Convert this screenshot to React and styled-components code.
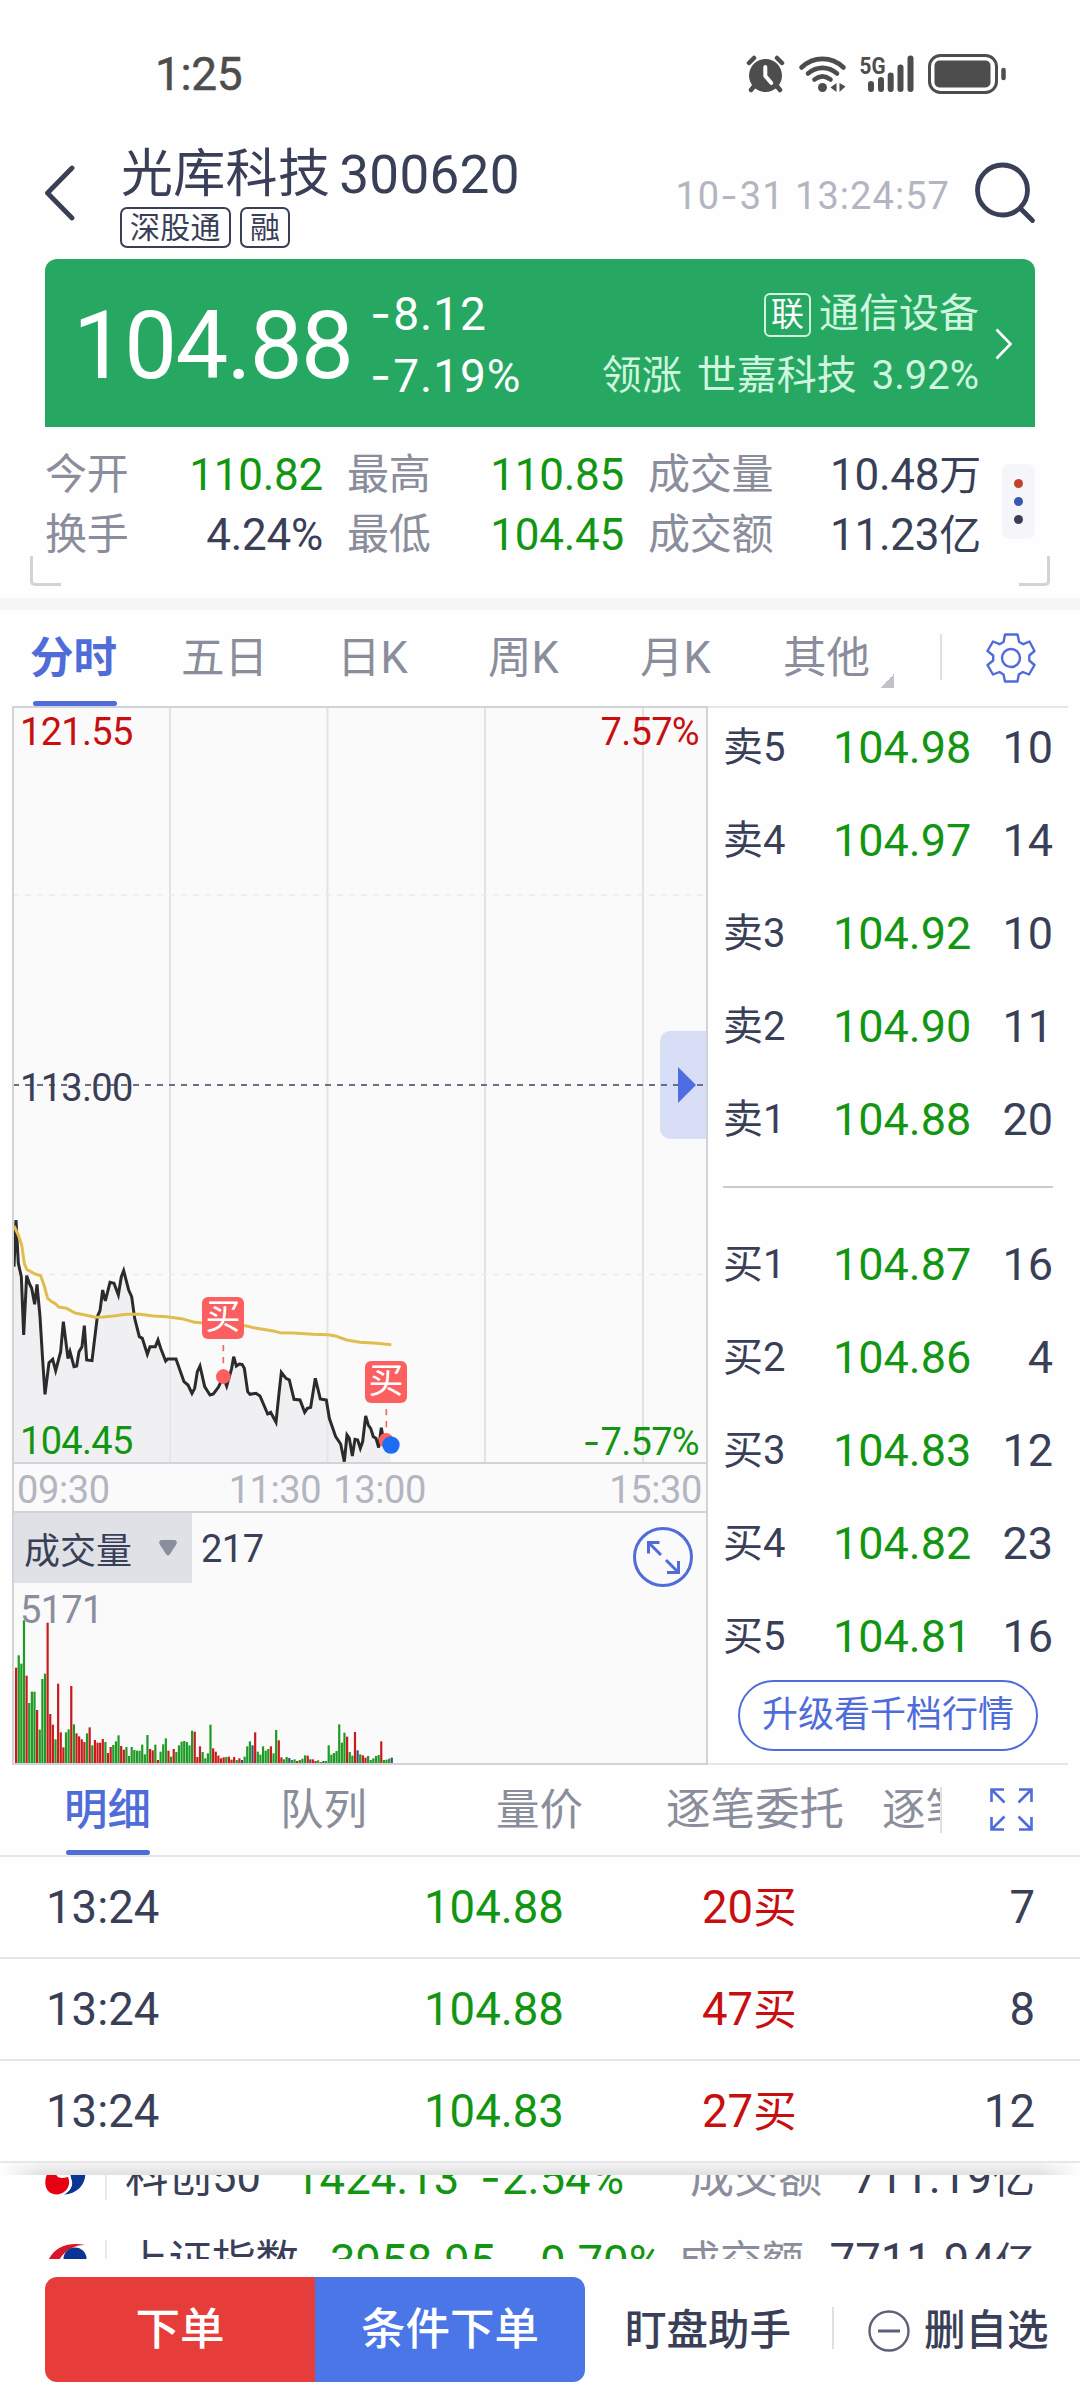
import React from 'react'
import styled, { createGlobalStyle } from 'styled-components'

const ink = '#3a3f58'
const muted = '#8a8d9b'
const faint = '#b3b5c1'
const blue = '#4f6cd9'
const green = '#129612'
const red = '#c80f0f'
const line = '#e7e7e9'
const frame = '#d2d3d9'

const GlobalStyle = createGlobalStyle`
* {
  box-sizing: border-box;
}
body {
  margin: 0;
  background: #fefefe;
  font-family: Roboto, "Noto Sans CJK SC", sans-serif;
  color: ${ink};
}
svg {
  display: block;
  flex: none;
}
`

const Page = styled.div`
width: 1080px;
height: 2400px;
overflow: hidden;
display: flex;
flex-direction: column;
background: #fefefe;
white-space: nowrap;
`

const Dash = styled.span`
font-family: Inter, sans-serif;
margin-right: 1px;
`

/* ---------- status bar ---------- */

const StatusBar = styled.div`
height: 110px;
padding: 37px 73px 0 155px;
display: flex;
align-items: center;
justify-content: space-between;
flex: none;
`
const Clock = styled.div`
font-size: 46px;
line-height: 50px;
color: #4d4d4d;
letter-spacing: -0.4px;
-webkit-text-stroke: 0.5px #4d4d4d;
`

/* ---------- header ---------- */

const Header = styled.header`
height: 149px;
display: flex;
flex: none;
padding: 0 44px;
`
const Back = styled.div`
width: 77px;
padding-top: 55px;
`
const Names = styled.div`
padding-top: 35px;
flex: 1;
`
const Title = styled.h1`
margin: 0;
font-size: 53px;
font-weight: 400;
line-height: 60px;
letter-spacing: 0.3px;
display: flex;
gap: 9px;
`
const Name = styled.span`
font-size: 52px;
`
const Tags = styled.div`
margin: 2px 0 0 -1px;
display: flex;
gap: 9px;
`
const Tag = styled.span`
border: 2px solid ${ink};
border-radius: 7px;
height: 41px;
line-height: 38px;
padding: 0 8px;
font-size: 30px;
letter-spacing: 0.3px;
`
const Stamp = styled.div`
font-size: 38px;
line-height: 44px;
padding-top: 63px;
color: ${faint};
letter-spacing: 1.05px;
margin-right: 25px;
`
const Search = styled.div`
padding-top: 52px;
`

/* ---------- quote card ---------- */

const Card = styled.section`
width: 990px;
height: 168px;
margin-left: 45px;
flex: none;
border-radius: 12px 12px 0 0;
background: #27a862;
color: #fff;
display: flex;
padding: 24px 22px 22px 28px;
`
const Last = styled.div`
font-size: 94px;
line-height: 126px;
letter-spacing: -1.6px;
width: 297px;
`
const Change = styled.div`
font-size: 46px;
line-height: 61px;
letter-spacing: 1px;
flex: 1;
`
const Sector = styled.div`
font-size: 40px;
line-height: 62px;
color: #cff7df;
text-align: right;
word-spacing: 5px;
`
const SectorTag = styled.span`
display: inline-block;
height: 44px;
line-height: 40px;
width: 47px;
text-align: center;
font-size: 33px;
border: 2px solid #cff7df;
border-radius: 6px;
color: #fff;
margin-right: 8px;
vertical-align: 1px;
`
const Arrow = styled.div`
padding: 45px 0 0 16px;
`

/* ---------- stats ---------- */

const Stats = styled.section`
height: 171px;
flex: none;
position: relative;
display: flex;
padding: 18px 44px 0 45px;

&::before, &::after {
  content: "";
  position: absolute;
  top: 129px;
  width: 28px;
  height: 27px;
  border-bottom: 3px solid ${frame};
}
&::before {
  left: 30px;
  border-left: 3px solid ${frame};
  border-bottom-left-radius: 5px;
}
&::after {
  right: 30px;
  border-right: 3px solid ${frame};
  border-bottom-right-radius: 5px;
}
`
const StatGrid = styled.div`
display: grid;
grid-template-columns: 278px 277px 333px;
grid-auto-rows: 60px;
column-gap: 24px;
width: 937px;
`
const Stat = styled.div`
display: flex;
justify-content: space-between;
line-height: 60px;
font-size: 44px;
letter-spacing: -0.25px;
color: ${props => props.color || ink};
`
const StatLabel = styled.span`
font-size: ${props => props.size || 42}px;
color: ${muted};
`
const Unit = styled.span`
font-size: ${props => props.size || 42}px;
`
const More = styled.div`
width: 33px;
height: 75px;
margin: 19px 0 0 20px;
border-radius: 8px;
background: #f5f6f9;
display: flex;
flex-direction: column;
align-items: center;
justify-content: center;
gap: 9px;
`
const Dot = styled.i`
width: 9px;
height: 9px;
border-radius: 50%;
background: ${props => props.color};
`
const Band = styled.div`
height: 12px;
flex: none;
background: #f6f6f9;
`

/* ---------- period tabs ---------- */

const Tabs = styled.nav`
height: 96px;
flex: none;
display: flex;
padding-left: 30px;
`
const Tab = styled.div`
width: ${props => props.w}px;
font-size: 43.5px;
line-height: 97px;
color: ${props => (props.$active ? blue : muted)};
font-weight: ${props => (props.$active ? 700 : 400)};
`
const Mark = styled.div`
width: 84px;
height: 5px;
margin: ${props => props.$top}px 0 0 ${props => props.$left || 1}px;
border-radius: 3px;
background: ${blue};
`
const Caret = styled.div`
margin: 64px 46px 0 0;
width: 14px;
height: 14px;
background: linear-gradient(135deg, transparent 50%, #c2c3c8 50%);
`
const Rule = styled.div`
width: 2px;
height: ${props => props.h || 46}px;
margin-top: ${props => props.$top}px;
background: #e0e0e3;
`
const Gear = styled.div`
margin: 23px 0 0 44px;
`

/* ---------- chart ---------- */

const Main = styled.main`
display: flex;
height: 1059px;
flex: none;
padding: 0 12px;
`
const Charts = styled.div`
width: 696px;
display: flex;
flex-direction: column;
`
const Pane = styled.div`
position: relative;
height: ${props => props.h}px;
background: #fafafa;
border: 2px solid ${frame};
overflow: hidden;
`
const Plot = styled.svg`
position: absolute;
left: -2px;
top: -2px;
`
/* value labels drawn over the plot, on its left or right edge */
const PaneText = styled.span`
position: absolute;
${props => (props.$right ? 'right: 7px;' : 'left: 6px;')}
top: ${props => props.y}px;
font-size: 38px;
line-height: 40px;
letter-spacing: -0.7px;
color: ${props => props.color};
`
const Axis = styled.div`
height: 47px;
background: #fafafa;
border: solid ${frame};
border-width: 0 2px;
display: flex;
padding: 0 4px 0 3px;
font-size: 38px;
line-height: 53px;
letter-spacing: -0.4px;
color: ${faint};

span:nth-child(2) {
  margin-left: 119px;
}
span:nth-child(3) {
  margin: 0 auto 0 12px;
}
`
const Drawer = styled.div`
position: absolute;
right: -2px;
top: 323px;
width: 48px;
height: 108px;
border-radius: 10px 0 0 10px;
background: rgba(79, 108, 230, 0.2);

&::after {
  content: "";
  position: absolute;
  left: 18px;
  top: 36px;
  border: solid transparent;
  border-width: 18px 0 18px 18px;
  border-left-color: #4f6ce0;
}
`
const Buy = styled.span`
position: absolute;
left: ${props => props.x}px;
top: ${props => props.y}px;
width: 42px;
height: 42px;
border-radius: 6px;
background: #fb5f60;
color: #fff;
font-size: 35px;
line-height: 42px;
text-align: center;
`
const VolumeHead = styled.div`
display: flex;
align-items: center;
font-size: 38px;
height: 72px;
gap: 9px;
letter-spacing: -0.5px;
`
const Picker = styled.div`
display: flex;
align-items: center;
justify-content: space-between;
width: 178px;
height: 70px;
margin-bottom: 2px;
padding: 0 14px 0 10px;
font-size: 36px;
letter-spacing: 0;
background: #e0e1e6;
`
const Enlarge = styled.div`
position: absolute;
left: 619px;
top: 14px;
`

/* ---------- order book ---------- */

const Book = styled.div`
width: 360px;
border-top: 2px solid ${line};
border-bottom: 2px solid ${line};
padding: 0 15px;
`
const Levels = styled.div`
margin-top: ${props => props.$top}px;
`
const Level = styled.div`
display: flex;
height: 93px;
line-height: 93px;
font-size: 45px;
`
const Side = styled.span`
width: 110px;
font-size: 40px;
`
const Price = styled.span`
flex: 1;
color: ${green};
`
const Split = styled.div`
height: 2px;
margin-top: 20px;
background: #c9cacf;
`
const Upgrade = styled.div`
width: 300px;
height: 71px;
margin: -3px 0 0 15px;
border: 2px solid ${blue};
border-radius: 36px;
color: ${blue};
text-align: center;
font-size: 36px;
line-height: 67px;
`

/* ---------- trade list ---------- */

const TradeTabs = styled.nav`
height: 92px;
flex: none;
display: flex;
padding-left: 64px;
border-bottom: 2px solid ${line};
`
const TabWindow = styled.div`
width: 876px;
height: 90px;
overflow: hidden;
display: flex;
`
const TradeTab = styled(Tab)`
line-height: 91px;
font-size: ${props => props.size || 43.5}px;
flex: none;
font-weight: ${props => (props.$active ? 500 : 400)};
`
const Expand = styled.div`
margin: 23px 0 0 48px;
`
const Trade = styled.div`
height: 102px;
flex: none;
display: grid;
grid-template-columns: 378px 278px 1fr auto;
padding: 0 45px 0 46px;
line-height: 102px;
font-size: 45.5px;
border-bottom: 2px solid ${line};
`
const Tint = styled.span`
color: ${props => props.color};
`

/* ---------- index ticker ---------- */

const Shade = styled.div`
height: 12px;
flex: none;
background: linear-gradient(#f4f4f4, #e0e0e1);
-webkit-mask-image: linear-gradient(90deg, transparent, #000 40px, #000 1040px, transparent);
mask-image: linear-gradient(90deg, transparent, #000 40px, #000 1040px, transparent);
`
const Ticker = styled.div`
height: 84px;
flex: none;
overflow: hidden;
`
const Index = styled.div`
height: 83px;
margin-top: ${props => props.$top || 0}px;
padding: 0 45px;
display: grid;
grid-template-columns: ${props => props.cols};
align-items: center;
font-size: 45.5px;
line-height: 83px;

& > :last-child {
  justify-self: end;
}
`
const IndexName = styled.span`
font-size: 43.5px;
border-left: 2px solid #e8e8ea;
line-height: 44px;
padding-left: 18px;
`

/* ---------- action bar ---------- */

const Actions = styled.footer`
height: 141px;
flex: none;
display: flex;
padding: 18px 0 0 45px;
line-height: 107px;
font-size: 41.5px;
font-weight: 500;
`
const Order = styled.div`
width: 270px;
height: 105px;
text-align: center;
font-size: 44.5px;
color: #fff;
background: ${props => props.color};
border-radius: ${props => (props.$left ? '12px 0 0 12px' : '0 12px 12px 0')};
`
const Helper = styled.span`
margin: 0 41px 0 40px;
`
const Remove = styled.span`
height: 107px;
display: flex;
align-items: center;
gap: 14px;
margin-left: 34px;
`

const pricePoints = '42,320 48,180 55,310 64,350 71,525 80,347 88,370 95,385 104,433 111,373 120,470 128,600 135,703 147,608 158,598 167,632 182,575 190,485 204,596 210,575 222,620 230,618 237,575 246,560 253,497 260,600 276,602 292,470 300,452 308,390 316,423 330,367 342,370 355,405 364,350 371,332 386,390 395,410 404,475 418,530 427,535 442,583 450,560 466,560 474,540 482,565 497,603 503,597 528,597 552,665 564,675 576,700 584,685 592,635 600,618 614,680 630,705 640,702 655,682 670,650 680,678 695,625 701,590 709,618 718,612 726,613 733,625 743,695 750,703 768,700 780,708 803,762 812,757 828,787 836,710 844,637 858,655 868,660 882,718 900,720 914,757 922,745 932,742 946,655 961,717 979,720 988,775 1007,830 1022,852 1033,905 1041,825 1048,835 1057,888 1065,838 1073,840 1081,865 1088,845 1097,768 1105,795 1112,805 1120,830 1128,835 1136,863 1144,803 1152,850 1172,855'
const averagePoints = '42,198 55,225 65,255 73,310 80,328 105,342 122,347 132,375 143,415 155,425 165,430 176,441 200,445 225,459 260,466 285,472 310,471 340,468 380,463 420,463 460,468 500,470 545,476 585,487 610,489 670,492 740,498 770,505 820,513 840,518 880,519 940,523 985,524 1010,529 1040,540 1080,547 1130,550 1174,554'

// one bar a minute: direction (r up, g down, k flat) and height in thirds of a pixel
const volume = 'r286 g323 g298 g428 r262 g180 g214 g214 r159 g100 g252 g268 r421 r147 r115 g71 r238 r92 r47 g92 g101 r231 g116 r89 r80 r71 r63 g89 r107 g53 r69 r61 r61 r72 g63 r30 r48 g54 g65 g83 r51 r40 g48 g21 g48 g39 g37 g37 g55 g26 g84 r42 r38 g55 r9 g34 g56 g74 r37 g19 r42 g33 g53 g64 g66 g63 g53 g97 r94 r18 r50 g33 g14 g29 g115 r44 r34 r22 r14 r17 g18 r19 r10 r18 g9 r14 k9 g19 g50 g65 k53 r92 g34 g25 g50 g37 g42 r50 g29 g99 r68 r17 g11 g18 k15 g9 g11 r6 g9 g13 g23 r22 k11 r11 r6 g8 g3 k6 g6 g53 g25 g30 g36 g116 g61 g91 r79 g33 g22 r93 k38 g26 r23 r16 g21 g9 g14 g21 g24 r65 g9 g10 g13 k16'.split(' ')
const barColor = { r: '#c81c1c', g: '#1f9a24', k: '#474c68' }

const PriceChart = () => (
  <Plot width="696" height="758" viewBox="12 706 696 758" fill="none">
    <g stroke="#e3e3e6" strokeWidth="2">
      <path d="M170 708V1463M327.500 708V1463M485 708V1463M643 708V1463" />
      <path d="M13 895H706M13 1274.500H706" stroke="#ececee" strokeWidth="1.500" strokeDasharray="6 6" />
    </g>
    <path d="M13 1085H704" stroke="#6b6f84" strokeWidth="2" strokeDasharray="6 6" />
    <g transform="translate(0 1160) scale(0.33333)" strokeLinejoin="round">
      <polygon points={`42,906 ${pricePoints} 1172,906`} fill="#e8e8ec" fillOpacity="0.55" />
      <polyline points={pricePoints} stroke="#2b2b2b" strokeWidth="9" strokeLinejoin="miter" />
      <polyline points={averagePoints} stroke="#e0bd4e" strokeWidth="9" />
      <path d="M670 555V630M1159 747V820" stroke="#f0696a" strokeWidth="5" strokeDasharray="19 17" />
      <circle cx="670" cy="650" r="22" fill="#fb5f60" />
      <circle cx="1158" cy="841" r="22" fill="#fb5f60" />
      <circle cx="1173" cy="855" r="26" fill="#1b6ef3" />
    </g>
  </Plot>
)

const VolumeChart = () => (
  <Plot width="696" height="254" viewBox="12 1511 696 254">
    {volume.map((bar, i) => {
      const h = Number(bar.slice(1)) / 3
      return <rect key={i} x={15 + i * 2.627} y={1763 - h} width="2.2" height={h} fill={barColor[bar[0]]} />
    })}
  </Plot>
)

const StatusIcons = () => (
  <svg width="262" height="44" viewBox="745 51 262 44" fill="none" stroke="#4d4d4d">
    <circle cx="765.5" cy="74.500" r="16.500" fill="#4d4d4d" stroke="none" />
    <path d="M749 62l5-5M782 62l-5-5M755 84l-4 5M776 84l4 5" strokeWidth="4.500" strokeLinecap="round" />
    <path d="M765.300 66v9l6 7" stroke="#fefefe" strokeWidth="4" strokeLinecap="round" strokeLinejoin="round" />
    <g strokeWidth="4.600" strokeLinecap="round">
      <path d="M801.500 66.500c12-11.500 30-11.500 42 0M808 72.500c9-7.500 20-7.500 29 0M814.500 78.500c5-3.800 11-3.800 16 0" />
    </g>
    <circle cx="822.500" cy="86.500" r="4.500" fill="#4d4d4d" stroke="none" />
    <path d="M836.500 82v9l-6-4.500zM839.500 82v9l6-5.500z" fill="#4d4d4d" stroke="none" />
    <text x="859.500" y="72.500" fontSize="24" fontWeight="700" fontFamily="Roboto" textLength="26" lengthAdjust="spacingAndGlyphs" fill="#4d4d4d" stroke="none">5G</text>
    <path d="M871 83v5M881 79v9M890.700 74.500v13.500M900.500 66.500v21.500M910.500 57.500v30.500" strokeWidth="6" strokeLinecap="round" />
    <rect x="929.500" y="54.500" width="67" height="37" rx="11" strokeWidth="3" />
    <rect x="934.500" y="59.500" width="56" height="27" rx="5" fill="#4d4d4d" stroke="none" />
    <path d="M1003.500 69v8" strokeWidth="4.500" strokeLinecap="round" />
  </svg>
)

const BackIcon = () => (
  <svg width="32" height="56" viewBox="0 0 32 56" fill="none" stroke={ink} strokeWidth="4.800" strokeLinecap="round" strokeLinejoin="round">
    <path d="M28 3L3.500 28L28 53" />
  </svg>
)

const SearchIcon = () => (
  <svg width="61" height="62" viewBox="0 0 61 62" fill="none" stroke={ink} strokeWidth="4.800" strokeLinecap="round">
    <circle cx="27.500" cy="28" r="25" />
    <path d="M45.500 46.500L57.500 58.500" />
  </svg>
)

const GearIcon = () => (
  <svg width="50" height="50" viewBox="-1 -1 50 50" fill="none" stroke={blue} strokeWidth="2.400" strokeLinejoin="round">
    <path d="M18 0.500H30.500L32.200 8L36.300 10.200L42.500 7.500L47.500 17L42.300 21.500V26.500L47.500 31L42 40.500L35.800 38L31.800 40.500L30.500 47.500H18L16.500 40.500L12.500 38L6 40.500L0.500 31L6.200 26.500V21.500L0.500 17L6 7.500L12.500 10.200L16.500 8Z" />
    <circle cx="24" cy="24" r="9" />
  </svg>
)

const ZoomIcon = () => (
  <svg width="60" height="60" viewBox="0 0 60 60" fill="none" stroke={blue} strokeWidth="3">
    <circle cx="30" cy="30" r="28.500" />
    <path d="M15.500 26.500V15.500H26.500M16 16L28 28M45.500 34V45.500H34M45 45L33 33" />
  </svg>
)

const ExpandIcon = () => (
  <svg width="43" height="43" viewBox="0 0 43 43" fill="none" stroke={blue} strokeWidth="2.600">
    <path d="M1.500 14V1.500H14M2 2L14.500 14.500M29 1.500H41.500V14M41 2L28.500 14.500M1.500 29V41.500H14M2 41L14.500 28.500M29 41.500H41.500V29M41 41L28.500 28.500" />
  </svg>
)

const StarLogo = () => (
  <svg width="42" height="42" viewBox="0 0 42 42">
    <path d="M40 14C42 26 33 37 19 37.500C26 33 29 28 26 21L25 14Z" fill="#0b3594" />
    <path d="M24 17C29 27 27 33 19 37.500C25 31 26 26 22 20Z" fill="#fefefe" />
    <path d="M2 17H11C12 21 16 22 23 20C27 29 20 37.500 11 37.500C1 37 -2 27 2 17Z" fill="#e60012" />
  </svg>
)

const ShanghaiLogo = () => (
  <svg width="42" height="42" viewBox="0 0 42 42">
    <path d="M2 23C6 9 20 0 40 4C28 4 18 10 12 23Z" fill="#d9152b" />
    <circle cx="30" cy="18" r="11.500" fill="#0b3594" />
  </svg>
)

const MinusIcon = () => (
  <svg width="42" height="42" viewBox="0 0 42 42" fill="none" stroke="#5d6178" strokeWidth="2.400">
    <circle cx="21" cy="21" r="19.500" />
    <path d="M10 21H32" strokeWidth="3" />
  </svg>
)

const Row = ({ side, price, qty }) => (
  <Level>
    <Side>{side}</Side>
    <Price>{price}</Price>
    <span>{qty}</span>
  </Level>
)

const sells = [
  ['卖5', '104.98', 10], ['卖4', '104.97', 14], ['卖3', '104.92', 10], ['卖2', '104.90', 11], ['卖1', '104.88', 20]
]
const buys = [
  ['买1', '104.87', 16], ['买2', '104.86', 4], ['买3', '104.83', 12], ['买4', '104.82', 23], ['买5', '104.81', 16]
]
const trades = [['104.88', '20', 7], ['104.88', '47', 8], ['104.83', '27', 12]]

const App = () => {
  return (
    <Page>
      <GlobalStyle />
      <StatusBar>
        <Clock>1:25</Clock>
        <StatusIcons />
      </StatusBar>

      <Header>
        <Back><BackIcon /></Back>
        <Names>
          <Title><Name>光库科技</Name>300620</Title>
          <Tags>
            <Tag>深股通</Tag>
            <Tag>融</Tag>
          </Tags>
        </Names>
        <Stamp>10<Dash>-</Dash>31 13:24:57</Stamp>
        <Search><SearchIcon /></Search>
      </Header>

      <Card>
        <Last>104.88</Last>
        <Change>
          <div><Dash>-</Dash>8.12</div>
          <div><Dash>-</Dash>7.19%</div>
        </Change>
        <Sector>
          <div><SectorTag>联</SectorTag>通信设备</div>
          <div>领涨 世嘉科技 3.92%</div>
        </Sector>
        <Arrow>
          <svg width="18" height="32" viewBox="0 0 18 32" fill="none" stroke="#fff" strokeWidth="2.600">
            <path d="M1.500 1.500L15.500 16L1.500 30.500" />
          </svg>
        </Arrow>
      </Card>

      <Stats>
        <StatGrid>
          <Stat color={green}><StatLabel>今开</StatLabel>110.82</Stat>
          <Stat color={green}><StatLabel>最高</StatLabel>110.85</Stat>
          <Stat><StatLabel>成交量</StatLabel><span>10.48<Unit>万</Unit></span></Stat>
          <Stat><StatLabel>换手</StatLabel>4.24%</Stat>
          <Stat color={green}><StatLabel>最低</StatLabel>104.45</Stat>
          <Stat><StatLabel>成交额</StatLabel><span>11.23<Unit>亿</Unit></span></Stat>
        </StatGrid>
        <More>
          <Dot color="#c1422f" />
          <Dot color="#3b55b3" />
          <Dot color={ink} />
        </More>
      </Stats>
      <Band />

      <Tabs>
        <Tab w={151} $active>分时<Mark $top={-6} $left={3} /></Tab>
        <Tab w={156}>五日</Tab>
        <Tab w={151}>日K</Tab>
        <Tab w={152}>周K</Tab>
        <Tab w={143}>月K</Tab>
        <Tab w={97}>其他</Tab>
        <Caret />
        <Rule $top={24} />
        <Gear><GearIcon /></Gear>
      </Tabs>

      <Main>
        <Charts>
          <Pane h={758}>
            <PriceChart />
            <PaneText y={4} color={red}>121.55</PaneText>
            <PaneText y={4} color={red} $right>7.57%</PaneText>
            <PaneText y={360} color={ink}>113.00</PaneText>
            <PaneText y={713} color={green}>104.45</PaneText>
            <PaneText y={713} color={green} $right><Dash>-</Dash>7.57%</PaneText>
            <Buy x={188} y={589}>买</Buy>
            <Buy x={351} y={653}>买</Buy>
            <Drawer />
          </Pane>
          <Axis>
            <span>09:30</span>
            <span>11:30</span>
            <span>13:00</span>
            <span>15:30</span>
          </Axis>
          <Pane h={254}>
            <VolumeHead>
              <Picker>
                成交量
                <svg width="20" height="18" viewBox="0 0 20 18">
                  <path d="M3 1H17Q20 2 18 6L12 15Q10 18 8 15L2 6Q0 2 3 1Z" fill={muted} />
                </svg>
              </Picker>
              217
            </VolumeHead>
            <PaneText y={77} color={muted}>5171</PaneText>
            <VolumeChart />
            <Enlarge><ZoomIcon /></Enlarge>
          </Pane>
        </Charts>
        <Book>
          <Levels $top={-7}>
            {sells.map(([side, price, qty]) => <Row key={side} side={side} price={price} qty={qty} />)}
          </Levels>
          <Split />
          <Levels $top={30}>
            {buys.map(([side, price, qty]) => <Row key={side} side={side} price={price} qty={qty} />)}
          </Levels>
          <Upgrade>升级看千档行情</Upgrade>
        </Book>
      </Main>

      <TradeTabs>
        <TabWindow>
          <TradeTab w={216} $active>明细<Mark $top={-6} $left={2} /></TradeTab>
          <TradeTab w={216}>队列</TradeTab>
          <TradeTab w={170}>量价</TradeTab>
          <TradeTab w={216} size={44.5}>逐笔委托</TradeTab>
          <TradeTab w={216}>逐笔成交</TradeTab>
        </TabWindow>
        <Rule $top={22} />
        <Expand><ExpandIcon /></Expand>
      </TradeTabs>
      {trades.map(([price, lots, count], i) => (
        <Trade key={i}>
          <span>13:24</span>
          <Tint color={green}>{price}</Tint>
          <Tint color={red}>{lots}<Unit size={43.5}>买</Unit></Tint>
          <span>{count}</span>
        </Trade>
      ))}

      <Shade />
      <Ticker>
        <Index $top={-39} cols="60px 189px 186px 210px 150px 1fr">
          <StarLogo />
          <IndexName>科创50</IndexName>
          <Tint color={green}>1424.13</Tint>
          <Tint color={green}><Dash>-</Dash>2.54%</Tint>
          <StatLabel size={44}>成交额</StatLabel>
          <span>711.19<Unit size={43}>亿</Unit></span>
        </Index>
        <Index cols="60px 225px 188px 160px 150px 1fr">
          <ShanghaiLogo />
          <IndexName>上证指数</IndexName>
          <Tint color={green}>3958.95</Tint>
          <Tint color={green}><Dash>-</Dash>0.70%</Tint>
          <StatLabel>成交额</StatLabel>
          <span>7711.94<Unit size={40}>亿</Unit></span>
        </Index>
      </Ticker>

      <Actions>
        <Order color="#e73d3a" $left>下单</Order>
        <Order color="#4a76e8">条件下单</Order>
        <Helper>盯盘助手</Helper>
        <Rule $top={30} h={42} />
        <Remove><MinusIcon />删自选</Remove>
      </Actions>
    </Page>
  )
}

export default App
